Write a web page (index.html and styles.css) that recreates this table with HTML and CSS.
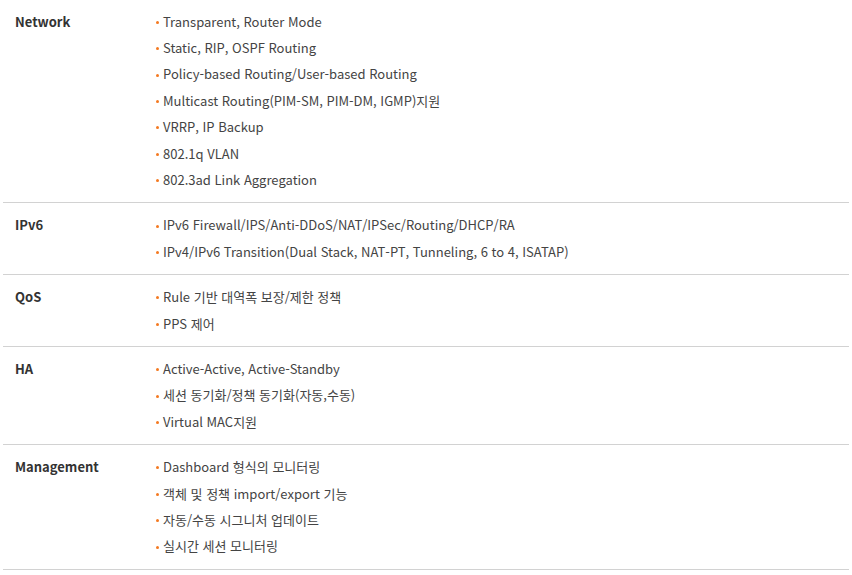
FILE: index.html
```html
<!DOCTYPE html>
<html lang="ko">
<head>
	<meta charset="UTF-8">
	<title>기능 사양</title>
	<link rel="stylesheet" href="styles.css">
</head>
<body>
	<div class="spec">
		<div class="row first">
			<div class="label">Network</div>
			<ul class="items">
				<li>Transparent, Router Mode</li>
				<li>Static, RIP, OSPF Routing</li>
				<li>Policy-based Routing/User-based Routing</li>
				<li>Multicast Routing(PIM-SM, PIM-DM, IGMP)지원</li>
				<li>VRRP, IP Backup</li>
				<li>802.1q VLAN</li>
				<li>802.3ad Link Aggregation</li>
			</ul>
		</div>
		<div class="row">
			<div class="label">IPv6</div>
			<ul class="items">
				<li>IPv6 Firewall/IPS/Anti-DDoS/NAT/IPSec/Routing/DHCP/RA</li>
				<li>IPv4/IPv6 Transition(Dual Stack, NAT-PT, Tunneling, 6 to 4, ISATAP)</li>
			</ul>
		</div>
		<div class="row">
			<div class="label">QoS</div>
			<ul class="items">
				<li>Rule 기반 대역폭 보장/제한 정책</li>
				<li>PPS 제어</li>
			</ul>
		</div>
		<div class="row">
			<div class="label">HA</div>
			<ul class="items">
				<li>Active-Active, Active-Standby</li>
				<li>세션 동기화/정책 동기화(자동,수동)</li>
				<li>Virtual MAC지원</li>
			</ul>
		</div>
		<div class="row">
			<div class="label">Management</div>
			<ul class="items">
				<li>Dashboard 형식의 모니터링</li>
				<li>객체 및 정책 import/export 기능</li>
				<li>자동/수동 시그니처 업데이트</li>
				<li>실시간 세션 모니터링</li>
			</ul>
		</div>
	</div>
</body>
</html>
```

FILE: styles.css
```css
body{
	margin: 0;
	background: #fff;
	font-family: "Noto Sans CJK KR", "Noto Sans", sans-serif;
	font-size: 13px;
	color: #444;
}
.spec{
	margin: 0 3px;
	width: 846px;
}
.row{
	display: grid;
	grid-template-columns: 152px 1fr;
	padding: 9px 0;
	border-bottom: 1px solid #d2d2d2;
}
.row.first{
	padding-top: 8.5px;
}
.label{
	padding-left: 12px;
	font-weight: bold;
	color: #333;
	line-height: 26.4px;
}
.items{
	list-style: none;
	margin: 0;
	padding: 0;
	line-height: 26.4px;
}
.items li{
	display: flex;
	align-items: center;
}
.items li::before{
	content: "";
	width: 3px;
	height: 3px;
	border-radius: 50%;
	background: #f47920;
	margin: 1px 4px 0 1px;
	flex: none;
}
```
